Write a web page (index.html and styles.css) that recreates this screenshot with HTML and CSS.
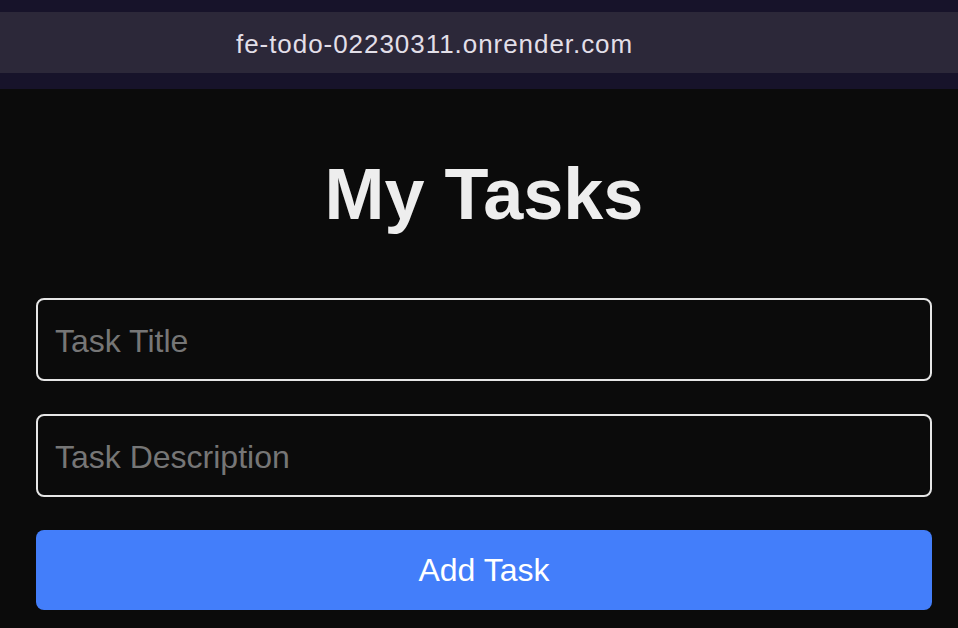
FILE: index.html
```html
<!DOCTYPE html>
<html>
<head>
<meta charset="utf-8">
<link rel="stylesheet" href="styles.css">
</head>
<body>
<header class="chrome">
  <div class="urlbar"><span class="url">fe-todo-02230311.onrender.com</span></div>
</header>
<main class="app">
  <h1 class="title">My Tasks</h1>
  <form class="form">
    <input class="field" type="text" placeholder="Task Title">
    <input class="field" type="text" placeholder="Task Description">
    <button class="add" type="button">Add Task</button>
  </form>
</main>
</body>
</html>
```
FILE: styles.css
```css
html, body {
  margin: 0;
  padding: 0;
  background: #0b0b0b;
  font-family: "Liberation Sans", Arial, sans-serif;
  overflow: hidden;
}
.chrome {
  background: #17132a;
  padding: 12px 0 16px;
}
.urlbar {
  box-sizing: border-box;
  height: 61px;
  background: #2c2839;
  display: flex;
  align-items: center;
  padding-left: 236px;
  padding-top: 3px;
}
.url {
  color: #e2dfe8;
  font-size: 26px;
  letter-spacing: 0.95px;
}
.app {
  padding: 0 26px 0 36px;
}
.title {
  margin: 69px 0 68px;
  text-align: center;
  font-size: 72px;
  line-height: 1;
  font-weight: bold;
  color: #eeeeee;
}
.form {
  display: flex;
  flex-direction: column;
  gap: 33px;
}
.field {
  box-sizing: border-box;
  height: 83px;
  width: 100%;
  background: #0b0b0b;
  border: 2px solid #e6e6e6;
  border-radius: 8px;
  padding: 3px 17px 0;
  font-family: "Liberation Sans", Arial, sans-serif;
  font-size: 32px;
  color: #eeeeee;
  outline: none;
}
.field::placeholder {
  color: #767676;
}
.add {
  height: 80px;
  width: 100%;
  border: none;
  border-radius: 8px;
  background: #437efa;
  color: #ffffff;
  font-family: "Liberation Sans", Arial, sans-serif;
  font-size: 32px;
  padding-top: 2px;
}
```
